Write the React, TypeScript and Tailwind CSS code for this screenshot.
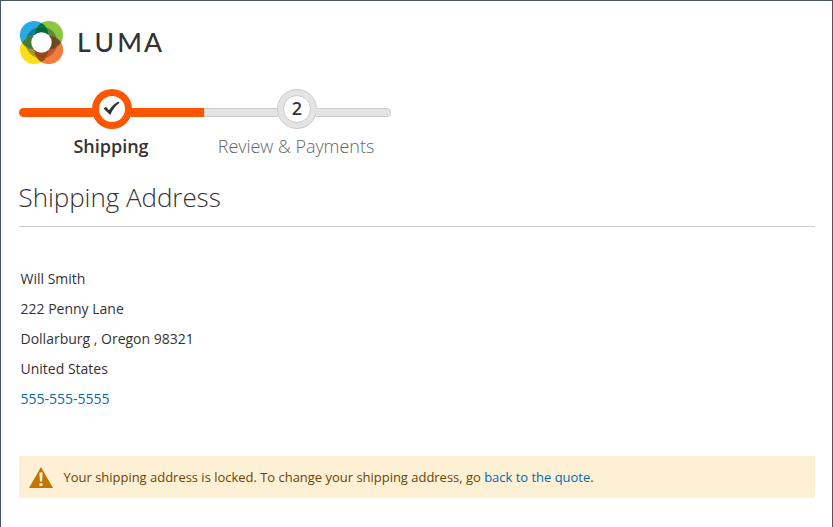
function Logo() {
  return (
    <svg className="block h-[44px] w-[146px]" viewBox="19 20 146 44" role="img" aria-label="LUMA">
      <defs>
        <clipPath id="ring"><circle cx="41.5" cy="42.5" r="16" /></clipPath>
        <clipPath id="ne"><circle cx="48.8" cy="35.2" r="14.3" /></clipPath>
        <clipPath id="sw"><circle cx="34.2" cy="49.8" r="14.3" /></clipPath>
        <clipPath id="se"><circle cx="48.8" cy="49.8" r="14.3" /></clipPath>
      </defs>
      <circle cx="34.2" cy="35.2" r="14.3" fill="#27aae1" />
      <circle cx="48.8" cy="35.2" r="14.3" fill="#8dc63f" />
      <circle cx="34.2" cy="49.8" r="14.3" fill="#ffde17" />
      <circle cx="48.8" cy="49.8" r="14.3" fill="#f47b3a" />
      <g clipPath="url(#ring)">
        <circle cx="34.2" cy="35.2" r="14.3" fill="#087aa9" />
        <circle cx="48.8" cy="35.2" r="14.3" fill="#598b37" />
        <circle cx="34.2" cy="49.8" r="14.3" fill="#a8952f" />
        <circle cx="48.8" cy="49.8" r="14.3" fill="#b9592b" />
      </g>
      <circle cx="34.2" cy="35.2" r="14.3" fill="#006b3a" clipPath="url(#ne)" />
      <circle cx="34.2" cy="35.2" r="14.3" fill="#477a35" clipPath="url(#sw)" />
      <circle cx="48.8" cy="35.2" r="14.3" fill="#69491d" clipPath="url(#se)" />
      <circle cx="48.8" cy="49.8" r="14.3" fill="#964619" clipPath="url(#sw)" />
      <g fill="none" stroke="#fff" strokeOpacity=".15" strokeWidth=".5">
        <circle cx="34.2" cy="35.2" r="14.3" />
        <circle cx="48.8" cy="35.2" r="14.3" />
        <circle cx="34.2" cy="49.8" r="14.3" />
        <circle cx="48.8" cy="49.8" r="14.3" />
        <circle cx="41.5" cy="42.5" r="16" />
      </g>
      <circle cx="41.5" cy="42.5" r="10.2" fill="#fff" />
      <text x="77 94.4 117.3 143.9" y="51.6" fill="#333" className="font-['Lato',sans-serif] text-[26.5px] font-medium">LUMA</text>
    </svg>
  );
}

function ActiveStep() {
  return (
    <li className="flex w-[185px] flex-col">
      <div className="flex h-10 w-full items-center">
        <span className="mt-[7px] h-[9px] flex-1 rounded-l-[5px] bg-[#ff5501]" />
        <span className="-mx-px flex size-10 items-center justify-center rounded-full bg-[#ff5501]">
          <span className="flex size-[26px] items-center justify-center rounded-full bg-white">
            <svg className="mb-[2px] h-[15px] w-[17px]" viewBox="0 0 17 15">
              <path d="M.5 7.4 3 5.8 6 9.2Q10 3.3 15.6.6L16.5 1.7Q10.6 6 7.2 14Z" fill="#333" />
            </svg>
          </span>
        </span>
        <span className="mt-[7px] h-[9px] flex-1 bg-[#ff5501]" />
      </div>
      <span className="mt-[5px] w-[184px] text-center text-[18px] leading-[25px] font-semibold tracking-[-0.02px] text-[#333]">Shipping</span>
    </li>
  );
}

function PendingStep() {
  return (
    <li className="flex w-[187px] flex-col">
      <div className="flex h-10 w-full items-center">
        <span className="mt-[7px] h-[9px] w-[74px] border-y border-l border-[#ccc] bg-[#e4e4e4]" />
        <span className="-mx-px flex size-10 items-center justify-center rounded-full border border-[#ccc] bg-[#e4e4e4]">
          <span className="flex size-7 items-center justify-center rounded-full border border-[#ccc] bg-white pb-[2px] text-[18px] leading-none font-semibold text-[#333]">2</span>
        </span>
        <span className="mt-[7px] h-[9px] flex-1 rounded-r-[5px] border-y border-r border-[#ccc] bg-[#e4e4e4]" />
      </div>
      <span className="mt-[5px] w-[184px] text-center text-[18px] leading-[25px] font-light tracking-[-0.04px] text-[#666]">Review &amp; Payments</span>
    </li>
  );
}

export default function App() {
  return (
    <div className="h-[527px] w-full overflow-hidden border-x border-t border-[#465963] bg-white px-[18px] pr-[17px] pt-[19px] font-['Open_Sans',sans-serif] text-[#333]">
      <header className="h-[69px]"><Logo /></header>
      <ol className="flex h-[94px]">
        <ActiveStep />
        <PendingStep />
      </ol>
      <h1 className="h-[44px] border-b border-[#ccc] text-[26px] leading-[28px] font-light tracking-[-0.05px]"><span className="-ml-[0.5px]">Shipping Address</span></h1>
      <address className="mt-[37px] pl-[1.5px] text-[14px] leading-[30px] not-italic">
        <div>Will Smith</div>
        <div>222 Penny Lane</div>
        <div>Dollarburg , Oregon 98321</div>
        <div>United States</div>
        <a className="text-[#006bb4]" href="#phone">555-555-5555</a>
      </address>
      <div className="mt-[42px] flex h-[42px] items-center bg-[#fdf0d5] pl-[10px] text-[13px] text-[#6f4400]" role="alert">
        <svg className="mr-[10.5px] h-[21px] w-[24px]" viewBox="0 0 24 21">
          <path d="M12 0 24 21H0Z" fill="#c07600" />
          <path d="M10.4 5.5h3.2l-.5 9h-2.2ZM10.5 16.2h3v2.8h-3Z" fill="#fdf0d5" />
        </svg>
        <p className="pt-[2px] tracking-[-0.02px]">Your shipping address is locked. To change your shipping address, go <a className="text-[#006bb4]" href="#quote">back to the quote</a>.</p>
      </div>
    </div>
  );
}
